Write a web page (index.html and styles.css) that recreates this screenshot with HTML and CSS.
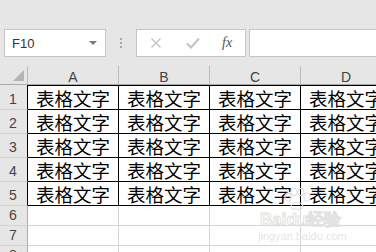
FILE: index.html
```html
<!DOCTYPE html>
<html>
<head>
	<title>Sheet</title>
	<link rel="stylesheet" href="styles.css">
</head>
<body>
	<div class="app">
		<div class="toolbar">
			<div class="name-box">
				<span class="name-text">F10</span>
				<span class="name-arrow"></span>
			</div>
			<div class="grip"><i></i><i></i><i></i></div>
			<div class="fx-box">
				<svg class="ico" width="12" height="12" viewBox="0 0 12 12"><path d="M1.5 1.5 L10.5 10.5 M10.5 1.5 L1.5 10.5" stroke="#c2c2c2" stroke-width="1.4" fill="none"/></svg>
				<svg class="ico" width="14" height="12" viewBox="0 0 14 12"><path d="M1 6.5 L5 10.5 L13 1.5" stroke="#c2c2c2" stroke-width="2" fill="none"/></svg>
				<span class="fx">fx</span>
			</div>
			<div class="formula"></div>
		</div>

		<div class="sheet">
			<div class="corner"><span class="tri"></span></div>
			<div class="col-h">A</div>
			<div class="col-h">B</div>
			<div class="col-h">C</div>
			<div class="col-h">D</div>

			<div class="row-h first dark">1</div>
			<div class="cell data">表格文字</div>
			<div class="cell data">表格文字</div>
			<div class="cell data">表格文字</div>
			<div class="cell data">表格文字</div>

			<div class="row-h dark">2</div>
			<div class="cell data">表格文字</div>
			<div class="cell data">表格文字</div>
			<div class="cell data">表格文字</div>
			<div class="cell data">表格文字</div>

			<div class="row-h dark">3</div>
			<div class="cell data">表格文字</div>
			<div class="cell data">表格文字</div>
			<div class="cell data">表格文字</div>
			<div class="cell data">表格文字</div>

			<div class="row-h dark">4</div>
			<div class="cell data">表格文字</div>
			<div class="cell data">表格文字</div>
			<div class="cell data">表格文字</div>
			<div class="cell data">表格文字</div>

			<div class="row-h dark">5</div>
			<div class="cell data">表格文字</div>
			<div class="cell data">表格文字</div>
			<div class="cell data">表格文字</div>
			<div class="cell data">表格文字</div>

			<div class="row-h">6</div>
			<div class="cell"></div><div class="cell"></div><div class="cell"></div><div class="cell"></div>
			<div class="row-h">7</div>
			<div class="cell"></div><div class="cell"></div><div class="cell"></div><div class="cell"></div>
			<div class="row-h">8</div>
			<div class="cell"></div><div class="cell"></div><div class="cell"></div><div class="cell"></div>
		</div>

		<!-- watermark -->
		<div class="mark">
			<svg class="paw" width="30" height="22" viewBox="0 0 30 22">
				<g fill="none" stroke="#e2e2e2" stroke-width="1.2">
					<ellipse cx="6" cy="9" rx="3" ry="4"/>
					<ellipse cx="12" cy="4" rx="3" ry="3.6"/>
					<ellipse cx="19" cy="4" rx="3" ry="3.6"/>
					<ellipse cx="25" cy="9" rx="3" ry="4"/>
					<path d="M9 19 C9 13 21 13 21 19 C21 22 9 22 9 19 Z"/>
				</g>
			</svg>
			<div class="mark-logo">Baidu经验</div>
			<div class="mark-url">jingyan.baidu.com</div>
		</div>
	</div>
</body>
</html>
```

FILE: styles.css
```css
*{
	margin: 0;
	padding: 0;
	box-sizing: border-box;
}
body{
	width: 376px;
	height: 252px;
	overflow: hidden;
	background: #fff;
	font-family: "Liberation Sans", "Noto Sans", sans-serif;
}
.app{
	position: relative;
	width: 376px;
	height: 252px;
	overflow: hidden;
}
.toolbar{
	height: 66px;
	background: #e6e6e6;
	display: flex;
	align-items: flex-start;
	padding: 29px 0 0 4px;
}
.name-box{
	width: 102px;
	height: 28px;
	background: #fff;
	border: solid 1px #c6c6c6;
	display: flex;
	align-items: center;
	justify-content: space-between;
	padding: 0 8px 0 7px;
}
.name-text{
	font-size: 13px;
	color: #333;
}
.name-arrow{
	width: 0;
	height: 0;
	border-left: 4px solid transparent;
	border-right: 4px solid transparent;
	border-top: 4px solid #7a7a7a;
}
.grip{
	width: 30px;
	height: 28px;
	display: flex;
	flex-direction: column;
	align-items: center;
	justify-content: center;
	gap: 2px;
}
.grip i{
	width: 2px;
	height: 2px;
	background: #a8a8a8;
}
.fx-box{
	width: 110px;
	height: 28px;
	background: #fff;
	border: solid 1px #c6c6c6;
	display: flex;
	align-items: center;
	padding: 0 0 0 13px;
	gap: 24px;
}
.fx{
	font-family: "Liberation Serif", serif;
	font-style: italic;
	font-size: 14px;
	color: #555;
	margin-left: -2px;
}
.formula{
	flex: 1;
	height: 28px;
	margin-left: 3px;
	background: #fff;
	border: solid 1px #c6c6c6;
	border-right: 0;
}

.sheet{
	display: grid;
	grid-template-columns: 28px repeat(4, 91px);
	grid-template-rows: 19px 25px repeat(4, 24px) repeat(3, 20px);
}
.corner, .col-h{
	background: #e6e6e6;
	border-right: solid 1px #bcbcbc;
	border-bottom: solid 1px #ababab;
}
.corner{
	position: relative;
}
.tri{
	position: absolute;
	right: 3px;
	bottom: 3px;
	width: 0;
	height: 0;
	border-left: 11px solid transparent;
	border-bottom: 11px solid #b4b4b4;
}
.col-h{
	font-size: 14px;
	color: #444;
	text-align: center;
	line-height: 20px;
	padding-top: 1px;
}
.row-h{
	background: #e6e6e6;
	border-right: solid 1px #ababab;
	border-bottom: solid 1px #d4d4d4;
	font-size: 14px;
	color: #444;
	display: flex;
	align-items: flex-end;
	justify-content: center;
	padding-bottom: 2px;
	padding-right: 1px;
}
.row-h.dark{
	border-right-color: #000;
}
.cell{
	border-right: solid 1px #d4d4d4;
	border-bottom: solid 1px #d4d4d4;
}
.cell.data{
	border-right-color: #000;
	border-bottom-color: #000;
	font-family: "Noto Sans CJK SC", sans-serif;
	font-size: 18.5px;
	line-height: 20px;
	color: #000;
	display: flex;
	align-items: flex-end;
	justify-content: center;
	padding-bottom: 1px;
	white-space: nowrap;
}
.first ~ .cell.data:nth-child(-n+10){
	border-top: solid 1px #000;
}

.mark{
	position: absolute;
	left: 258px;
	top: 190px;
	width: 92px;
}
.paw{
	position: absolute;
	left: 24px;
	top: -2px;
}
.mark-logo{
	position: absolute;
	left: 2px;
	top: 18px;
	font-family: "Liberation Sans", sans-serif;
	font-weight: bold;
	font-size: 17px;
	color: #fff;
	-webkit-text-stroke: 1px #e2e2e2;
	white-space: nowrap;
}
.mark-url{
	position: absolute;
	left: 0;
	top: 40px;
	font-size: 11px;
	color: #e6e6e6;
	white-space: nowrap;
}
```
